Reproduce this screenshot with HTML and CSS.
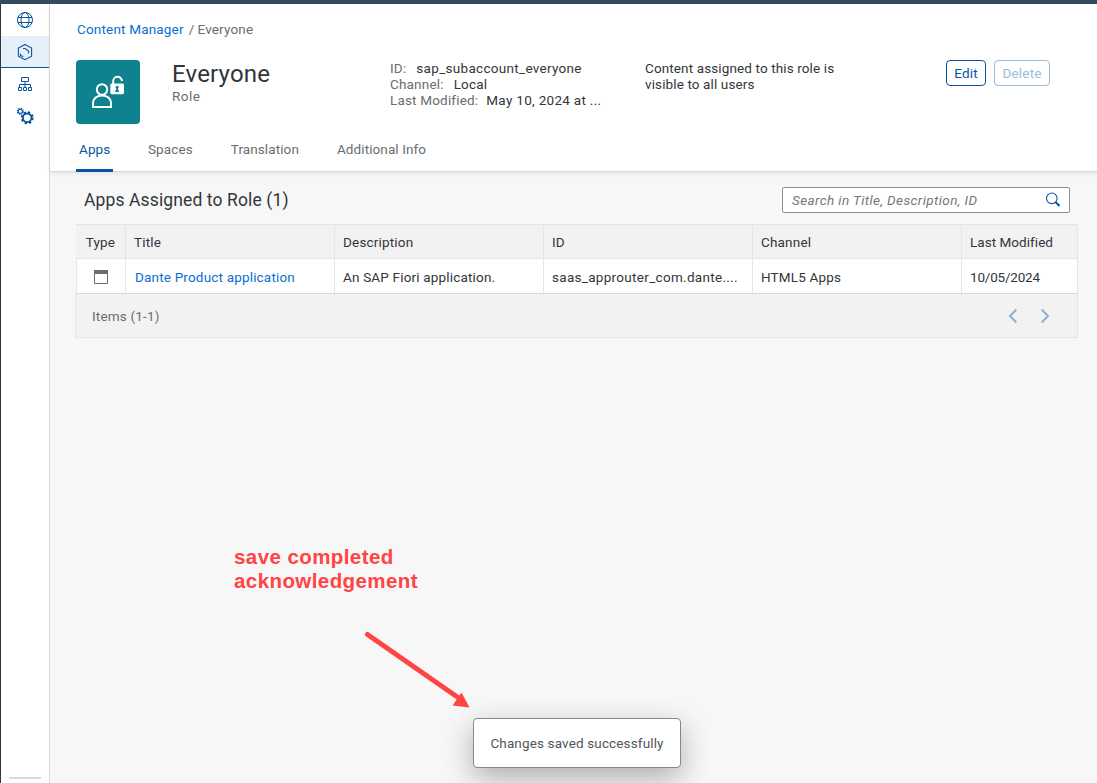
FILE: index.html
```html
<!DOCTYPE html>
<html lang="en">
<head>
<meta charset="utf-8">
<title>Everyone - Role</title>
<link rel="stylesheet" href="styles.css">
</head>
<body>
<div class="shell-bar"></div>
<div class="app">
  <nav class="side-nav">
    <a class="nav-item"><svg width="18" height="18" viewBox="0 0 18 18" fill="none" stroke="#0854a0" stroke-width="1"><circle cx="9" cy="9" r="7.5"/><ellipse cx="9" cy="9" rx="4" ry="7.5"/><path d="M2 6.500h14M2 11.500h14"/></svg></a>
    <a class="nav-item nav-selected"><svg width="18" height="18" viewBox="0 0 18 18" fill="none" stroke="#0854a0" stroke-width="1.1"><path d="M9 1.400 15.600 5v8.200L9 16.700l-6.600-3.500V5zM7 5.500h2.200l3.300 2.500v2.500M4.500 10.500v2l1.500.8h1.500"/></svg></a>
    <a class="nav-item"><svg width="18" height="18" viewBox="0 0 18 18" fill="none" stroke="#0854a0" stroke-width="1"><path d="M5.500 2.500h7v4h-7zM9 6.500v6M3.500 12.500v-3h11v3M2.500 12.500h3v3h-3zM7.500 12.500h3v3h-3zM12.500 12.500h3v3h-3z"/></svg></a>
    <a class="nav-item"><svg width="18" height="18" viewBox="0 0 18 18" fill="none" stroke="#0854a0"><circle cx="11.200" cy="10.800" r="4.300" stroke-width="1.800"/><circle cx="11.200" cy="10.800" r="5.500" stroke-width="2" stroke-dasharray="2.300 2.020"/><circle cx="4.300" cy="4.300" r="2.100" stroke-width="1.100"/><circle cx="4.300" cy="4.300" r="3" stroke-width="1.200" stroke-dasharray="1.200 1.156"/></svg></a>
    <div class="nav-divider"></div>
  </nav>
  <main class="page">
    <header class="page-header">
      <div class="breadcrumb"><a class="link">Content Manager</a><span class="slash">/</span><span>Everyone</span></div>
      <div class="summary">
        <div class="avatar"><svg width="64" height="64" viewBox="0 0 64 64" fill="none" stroke="#fff" stroke-width="2"><circle cx="26" cy="29.500" r="5.200"/><path d="M17 47v-3.500c0-4.500 3.300-8 9-8s9 3.500 9 8V47z"/><path d="M37.200 24v-2.500a4.400 4.400 0 0 1 8.800-.5"/><rect x="34.300" y="23.500" width="13.700" height="10.700" rx="1.400" fill="#fff" stroke="none"/><path d="M41.100 25.800a1.500 1.500 0 0 1 .9 2.700v1.800h1v1.600h-3.800v-1.600h1v-1.800a1.500 1.500 0 0 1 .9-2.700z" fill="#0f828f" stroke="none"/></svg></div>
        <div class="identity"><h1>Everyone</h1><div class="kind">Role</div></div>
        <dl class="facts">
          <div class="fact fact-short"><dt>ID:</dt><dd class="wide">sap_subaccount_everyone</dd></div>
          <div class="fact fact-short"><dt>Channel:</dt><dd>Local</dd></div>
          <div class="fact"><dt>Last Modified:</dt><dd class="wide">May 10, 2024 at ...</dd></div>
        </dl>
        <p class="description">Content assigned to this role is<br>visible to all users</p>
        <div class="actions"><button class="btn btn-edit">Edit</button><button class="btn btn-delete" disabled>Delete</button></div>
      </div>
      <div class="tabs">
        <a class="tab tab-active">Apps</a><a class="tab">Spaces</a><a class="tab">Translation</a><a class="tab">Additional Info</a>
      </div>
    </header>
    <section class="content">
      <div class="toolbar">
        <h2>Apps Assigned to Role (1)</h2>
        <div class="search"><span class="placeholder">Search in Title, Description, ID</span><svg width="16" height="16" viewBox="0 0 16 16" fill="none" stroke="#0854a0"><circle cx="6.800" cy="6.300" r="5.300" stroke-width="1.100"/><path d="m10.500 10 4 4" stroke-width="2.200"/></svg></div>
      </div>
      <div class="grid grid-head">
        <div class="cell type">Type</div><div class="cell">Title</div><div class="cell">Description</div><div class="cell">ID</div><div class="cell">Channel</div><div class="cell modified">Last Modified</div>
      </div>
      <div class="grid grid-row">
        <div class="cell type"><svg width="14" height="14" viewBox="0 0 14 14"><path d="M.5.500h13v13H.5z" fill="none" stroke="#6a6d70"/><path d="M0 0h14v4H0z" fill="#6a6d70"/></svg></div><div class="cell title"><a class="link">Dante Product application</a></div><div class="cell">An SAP Fiori application.</div><div class="cell wide">saas_approuter_com.dante....</div><div class="cell">HTML5 Apps</div><div class="cell date">10/05/2024</div>
      </div>
      <div class="pager"><span>Items (1-1)</span><div class="pager-arrows"><svg width="10" height="16" viewBox="0 0 10 16"><path d="M8.300 1.500 2 8l6.300 6.500"/></svg><svg width="10" height="16" viewBox="0 0 10 16"><path d="M1.700 1.500 8 8l-6.300 6.500"/></svg></div></div>
    </section>
  </main>
</div>
<div class="note">save completed<br>acknowledgement</div>
<svg class="arrow" width="112" height="84" viewBox="0 0 112 84"><path d="M7.500 6.500 98 69.500" stroke="#ff4444" stroke-width="5" stroke-linecap="round"/><path d="m109.500 79.500-17-2 9-13z" fill="#ff4444"/></svg>
<div class="toast">Changes saved successfully</div>
</body>
</html>
```
FILE: styles.css
```css
* { box-sizing: border-box; }
body { margin: 0; width: 1097px; height: 783px; display: flex; flex-direction: column; position: relative; overflow: hidden; background: #f7f7f7; color: #32363a; font: 13.5px/16px Roboto, "Liberation Sans", sans-serif; letter-spacing: .18px; }
h1, h2, p, dl, dd { margin: 0; font-weight: 400; }
svg { display: block; flex: none; }
.link { color: #0a6ed1; }
.wide { letter-spacing: .3px; }
.shell-bar { height: 4px; background: #354a5f; }
.app { flex: 1; display: flex; min-height: 0; }
.side-nav { width: 50px; display: flex; flex-direction: column; background: #fff; border-left: 1px solid #30343b; border-right: 1px solid #d9d9d9; }
.nav-item { height: 32px; display: flex; align-items: center; justify-content: center; }
.nav-selected { background: #e5f0fa; border-bottom: 1px solid #0854a0; }
.nav-divider { width: 32px; height: 2px; margin: auto 8px 4px; background: #d9d9d9; }
.page { flex: 1; min-width: 0; }
.page-header { position: relative; height: 168px; padding: 17px 47px 0 26px; background: #fff; border-bottom: 1px solid #d9d9d9; box-shadow: 0 2px 4px rgba(0, 0, 0, .08); }
.breadcrumb { display: flex; padding-left: 1px; color: #6a6d70; }
.slash { margin: 0 3px 0 5px; }
.summary { display: flex; margin-top: 23px; height: 64px; }
.avatar { flex: none; width: 64px; height: 64px; border-radius: 4px; background: #0f828f; }
.identity { flex: none; width: 250px; padding-left: 32px; }
.identity h1 { font-size: 24px; line-height: 28px; }
.kind { color: #6a6d70; letter-spacing: .45px; }
.facts { flex: none; width: 255px; }
.fact { display: flex; gap: 8px; }
.fact-short { gap: 10px; }
.fact dt { color: #6a6d70; }
.description { flex: 1; white-space: nowrap; letter-spacing: .12px; }
.actions { flex: none; display: flex; gap: 8px; height: 26px; }
.btn { height: 26px; padding: 0; border: 1px solid #0854a0; border-radius: 4px; background: #fff; color: #0854a0; font: inherit; letter-spacing: .2px; }
.btn-edit { width: 40px; }
.btn-delete { width: 56px; border-color: #9cbbd9; color: #9cbbd9; }
.tabs { display: flex; gap: 32px; height: 44px; color: #6a6d70; letter-spacing: .1px; }
.tab { height: 44px; padding: 17px 3px 0; white-space: nowrap; }
.tab-active { color: #0854a0; height: 48px; width: 37px; border-bottom: 3px solid #0854a0; }
.content { padding: 15px 19px 0 25px; }
.toolbar { display: flex; justify-content: space-between; align-items: center; height: 26px; padding: 0 8px 0 9px; }
.toolbar h2 { font-size: 17.5px; line-height: 22px; letter-spacing: .12px; }
.search { width: 288px; height: 26px; display: flex; align-items: center; justify-content: space-between; padding: 0 8px 0 9px; border: 1px solid #89919a; border-radius: 2px; background: #fff; }
.placeholder { color: #74777a; font-style: italic; letter-spacing: .4px; }
.grid { display: grid; grid-template-columns: 50px 209px 209px 209px 209px 116px; margin-left: 1px; width: 1002px; }
.grid-head { height: 35px; margin-top: 11px; background: #f2f2f2; border-top: 1px solid #e5e5e5; border-bottom: 1px solid #e5e5e5; }
.grid-row { height: 35px; background: #fff; border-bottom: 1px solid #d9d9d9; }
.cell { display: flex; align-items: center; padding: 2px 8px 0; border-right: 1px solid #e5e5e5; white-space: nowrap; }
.grid-head .cell { padding-top: 1px; }
.type { justify-content: center; }
.grid-row .type { border-left: 1px solid #e5e5e5; }
.grid-row .title { padding-left: 9px; }
.modified { letter-spacing: .04px; }
.date { letter-spacing: -.2px; }
.pager { height: 44px; display: flex; align-items: center; justify-content: space-between; padding: 1px 27px 0 16px; background: #f2f2f2; border: 1px solid #e5e5e5; border-top: 0; color: #6a6d70; }
.pager-arrows { display: flex; gap: 22px; }
.pager-arrows path { fill: none; stroke: #8fb0d3; stroke-width: 2; }
.note { position: absolute; left: 234px; top: 545px; color: #ff4444; font: bold 20.5px/24px "Liberation Sans", sans-serif; letter-spacing: .42px; }
.arrow { position: absolute; left: 360px; top: 628px; }
.toast { position: absolute; left: 473px; top: 718px; width: 208px; height: 50px; display: flex; align-items: center; justify-content: center; border: 1px solid #85878a; border-radius: 4px; background: #fff; box-shadow: 0 10px 30px rgba(0, 0, 0, .3); color: #515559; letter-spacing: .14px; }
```
